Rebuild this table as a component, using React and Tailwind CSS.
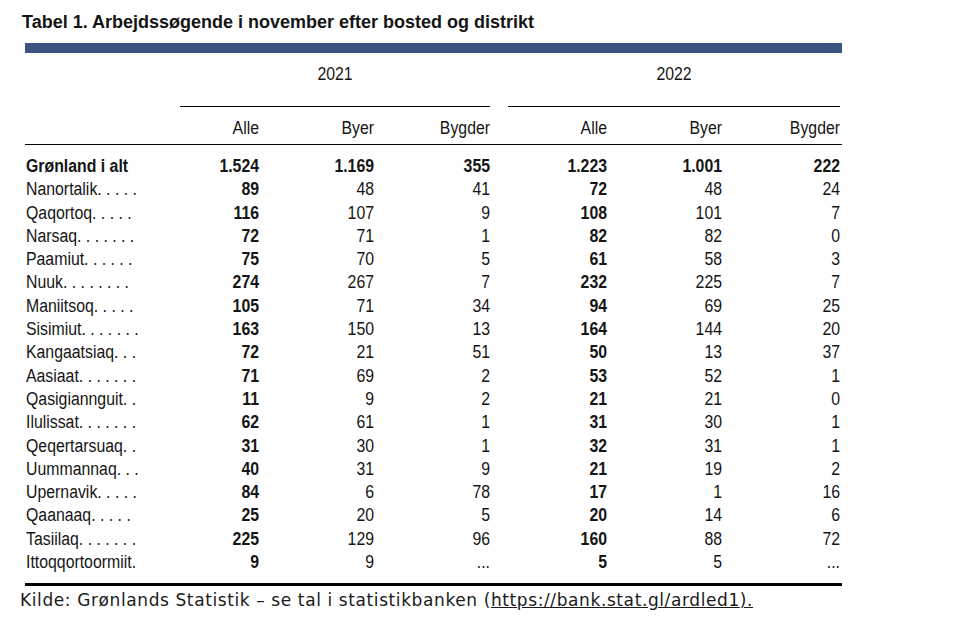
const rows = [
  ['Nanortalik. . . . .', '89', '48', '41', '72', '48', '24'],
  ['Qaqortoq. . . . .', '116', '107', '9', '108', '101', '7'],
  ['Narsaq. . . . . . .', '72', '71', '1', '82', '82', '0'],
  ['Paamiut. . . . . .', '75', '70', '5', '61', '58', '3'],
  ['Nuuk. . . . . . . .', '274', '267', '7', '232', '225', '7'],
  ['Maniitsoq. . . . .', '105', '71', '34', '94', '69', '25'],
  ['Sisimiut. . . . . . .', '163', '150', '13', '164', '144', '20'],
  ['Kangaatsiaq. . .', '72', '21', '51', '50', '13', '37'],
  ['Aasiaat. . . . . . .', '71', '69', '2', '53', '52', '1'],
  ['Qasigiannguit. .', '11', '9', '2', '21', '21', '0'],
  ['Ilulissat. . . . . . .', '62', '61', '1', '31', '30', '1'],
  ['Qeqertarsuaq. .', '31', '30', '1', '32', '31', '1'],
  ['Uummannaq. . .', '40', '31', '9', '21', '19', '2'],
  ['Upernavik. . . . .', '84', '6', '78', '17', '1', '16'],
  ['Qaanaaq. . . . .', '25', '20', '5', '20', '14', '6'],
  ['Tasiilaq. . . . . . .', '225', '129', '96', '160', '88', '72'],
  ['Ittoqqortoormiit.', '9', '9', '...', '5', '5', '...'],
]

const cols = 'grid grid-cols-[155px_79px_115px_116px_117px_115px_118px]'

// the source table is set in a narrow face; squeeze Liberation Sans to match
function Num({ children, bold }) {
  return (
    <div className="text-right">
      <span className={`inline-block origin-right scale-x-[0.88] ${bold ? 'font-bold' : ''}`}>
        {children}
      </span>
    </div>
  )
}

function Row({ cells, total }) {
  const [label, ...nums] = cells
  return (
    <div className={`${cols} h-[23.3px] leading-[23.3px]`}>
      <div className="pl-[1px] whitespace-nowrap">
        <span className={`inline-block origin-left scale-x-[0.88] ${total ? 'font-bold' : ''}`}>
          {label}
        </span>
      </div>
      {nums.map((n, i) => (
        <Num key={i} bold={total || i === 0 || i === 3}>
          {n}
        </Num>
      ))}
    </div>
  )
}

export default function App() {
  return (
    <div className="w-[960px] h-[630px] bg-white text-[#151515] font-['Liberation_Sans',Arial,sans-serif]">
      <h1 className="pt-[10px] pl-[22px] text-[18px] leading-[24px] font-bold">
        Tabel 1. Arbejdssøgende i november efter bosted og distrikt
      </h1>

      <div className="ml-[25px] mt-[9px] w-[817px] text-[18px]">
        <div className="h-[10px] bg-[#3a5583]" />

        <div className={`${cols} h-[54px]`}>
          <div />
          <div className="col-span-3 border-b border-black pt-[11px] leading-[20px] text-center">
            <span className="inline-block scale-x-[0.88]">2021</span>
          </div>
          <div className="col-span-3 pl-[18px]">
            <div className="h-full border-b border-black pt-[11px] leading-[20px] text-center">
              <span className="inline-block scale-x-[0.88]">2022</span>
            </div>
          </div>
        </div>

        <div className={`${cols} h-[38px] border-b border-black pt-[11px] leading-[20px]`}>
          <div />
          <Num>Alle</Num>
          <Num>Byer</Num>
          <Num>Bygder</Num>
          <Num>Alle</Num>
          <Num>Byer</Num>
          <Num>Bygder</Num>
        </div>

        <div className="pt-[10px]">
          <Row
            total
            cells={['Grønland i alt', '1.524', '1.169', '355', '1.223', '1.001', '222']}
          />
          {rows.map((r) => (
            <Row key={r[0]} cells={r} />
          ))}
        </div>

        <div className="mt-[9px] h-[3px] bg-black" />
      </div>

      <p className="pl-[20px] pt-[4px] text-[17px] leading-[20px] tracking-[0.6px] font-['DejaVu_Sans',Verdana,sans-serif] text-[#1a1a1a]">
        Kilde: Grønlands Statistik – se tal i statistikbanken (
        <span className="underline">https://bank.stat.gl/ardled1</span>
        <span className="underline">).</span>
      </p>
    </div>
  )
}
